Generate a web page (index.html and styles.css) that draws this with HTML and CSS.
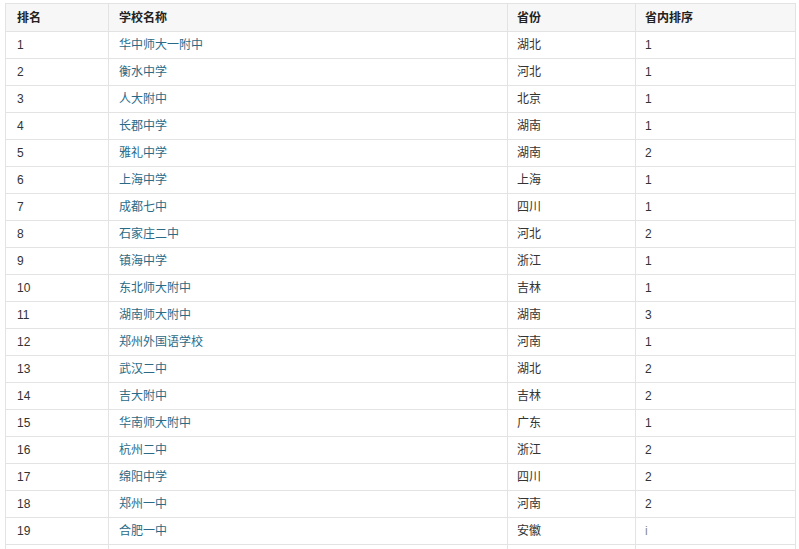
FILE: index.html
```html
<!DOCTYPE html>
<html lang="zh">
<head>
<meta charset="utf-8">
<title>学校排名</title>
<link rel="stylesheet" href="styles.css">
</head>
<body>
<table class="rank">
<colgroup><col class="c1"><col class="c2"><col class="c3"><col class="c4"></colgroup>
<thead>
<tr><th>排名</th><th>学校名称</th><th>省份</th><th>省内排序</th></tr>
</thead>
<tbody>
<tr><td>1</td><td><a class="school">华中师大一附中</a></td><td>湖北</td><td>1</td></tr>
<tr><td>2</td><td><a class="school">衡水中学</a></td><td>河北</td><td>1</td></tr>
<tr><td>3</td><td><a class="school">人大附中</a></td><td>北京</td><td>1</td></tr>
<tr><td>4</td><td><a class="school">长郡中学</a></td><td>湖南</td><td>1</td></tr>
<tr><td>5</td><td><a class="school">雅礼中学</a></td><td>湖南</td><td>2</td></tr>
<tr><td>6</td><td><a class="school">上海中学</a></td><td>上海</td><td>1</td></tr>
<tr><td>7</td><td><a class="school">成都七中</a></td><td>四川</td><td>1</td></tr>
<tr><td>8</td><td><a class="school">石家庄二中</a></td><td>河北</td><td>2</td></tr>
<tr><td>9</td><td><a class="school">镇海中学</a></td><td>浙江</td><td>1</td></tr>
<tr><td>10</td><td><a class="school">东北师大附中</a></td><td>吉林</td><td>1</td></tr>
<tr><td>11</td><td><a class="school">湖南师大附中</a></td><td>湖南</td><td>3</td></tr>
<tr><td>12</td><td><a class="school">郑州外国语学校</a></td><td>河南</td><td>1</td></tr>
<tr><td>13</td><td><a class="school">武汉二中</a></td><td>湖北</td><td>2</td></tr>
<tr><td>14</td><td><a class="school">吉大附中</a></td><td>吉林</td><td>2</td></tr>
<tr><td>15</td><td><a class="school">华南师大附中</a></td><td>广东</td><td>1</td></tr>
<tr><td>16</td><td><a class="school">杭州二中</a></td><td>浙江</td><td>2</td></tr>
<tr><td>17</td><td><a class="school">绵阳中学</a></td><td>四川</td><td>2</td></tr>
<tr><td>18</td><td><a class="school">郑州一中</a></td><td>河南</td><td>2</td></tr>
<tr><td>19</td><td><a class="school">合肥一中</a></td><td>安徽</td><td class="faint">i</td></tr>
<tr><td>&nbsp;</td><td>&nbsp;</td><td>&nbsp;</td><td>&nbsp;</td></tr>
</tbody>
</table>
</body>
</html>
```
FILE: styles.css
```css
html, body {
  margin: 0;
  padding: 0;
  background: #ffffff;
}
body {
  padding: 3px 0 0 5px;
  font-family: "Liberation Sans", "Noto Sans CJK SC", sans-serif;
  font-size: 12px;
  color: #333333;
}
.rank {
  border-collapse: collapse;
  table-layout: fixed;
  width: 790px;
  border: 1px solid #e6e6e6;
}
.c1 { width: 103px; }
.c2 { width: 399px; }
.c3 { width: 128px; }
.c4 { width: 160px; }
.rank th,
.rank td {
  border: 1px solid #e3e3e3;
  padding: 0 0 0 9px;
  text-align: left;
  vertical-align: middle;
  line-height: 16px;
  white-space: nowrap;
}
.rank th {
  height: 27px;
  background: #f7f7f7;
  font-weight: bold;
  color: #222222;
}
.rank td {
  height: 26px;
}
.rank td:first-child,
.rank th:first-child {
  padding-left: 11px;
}
.rank td:nth-child(2),
.rank th:nth-child(2) {
  padding-left: 10px;
}
.school {
  color: #2b6a86;
  text-decoration: none;
}
.faint {
  color: #888888;
}
```
